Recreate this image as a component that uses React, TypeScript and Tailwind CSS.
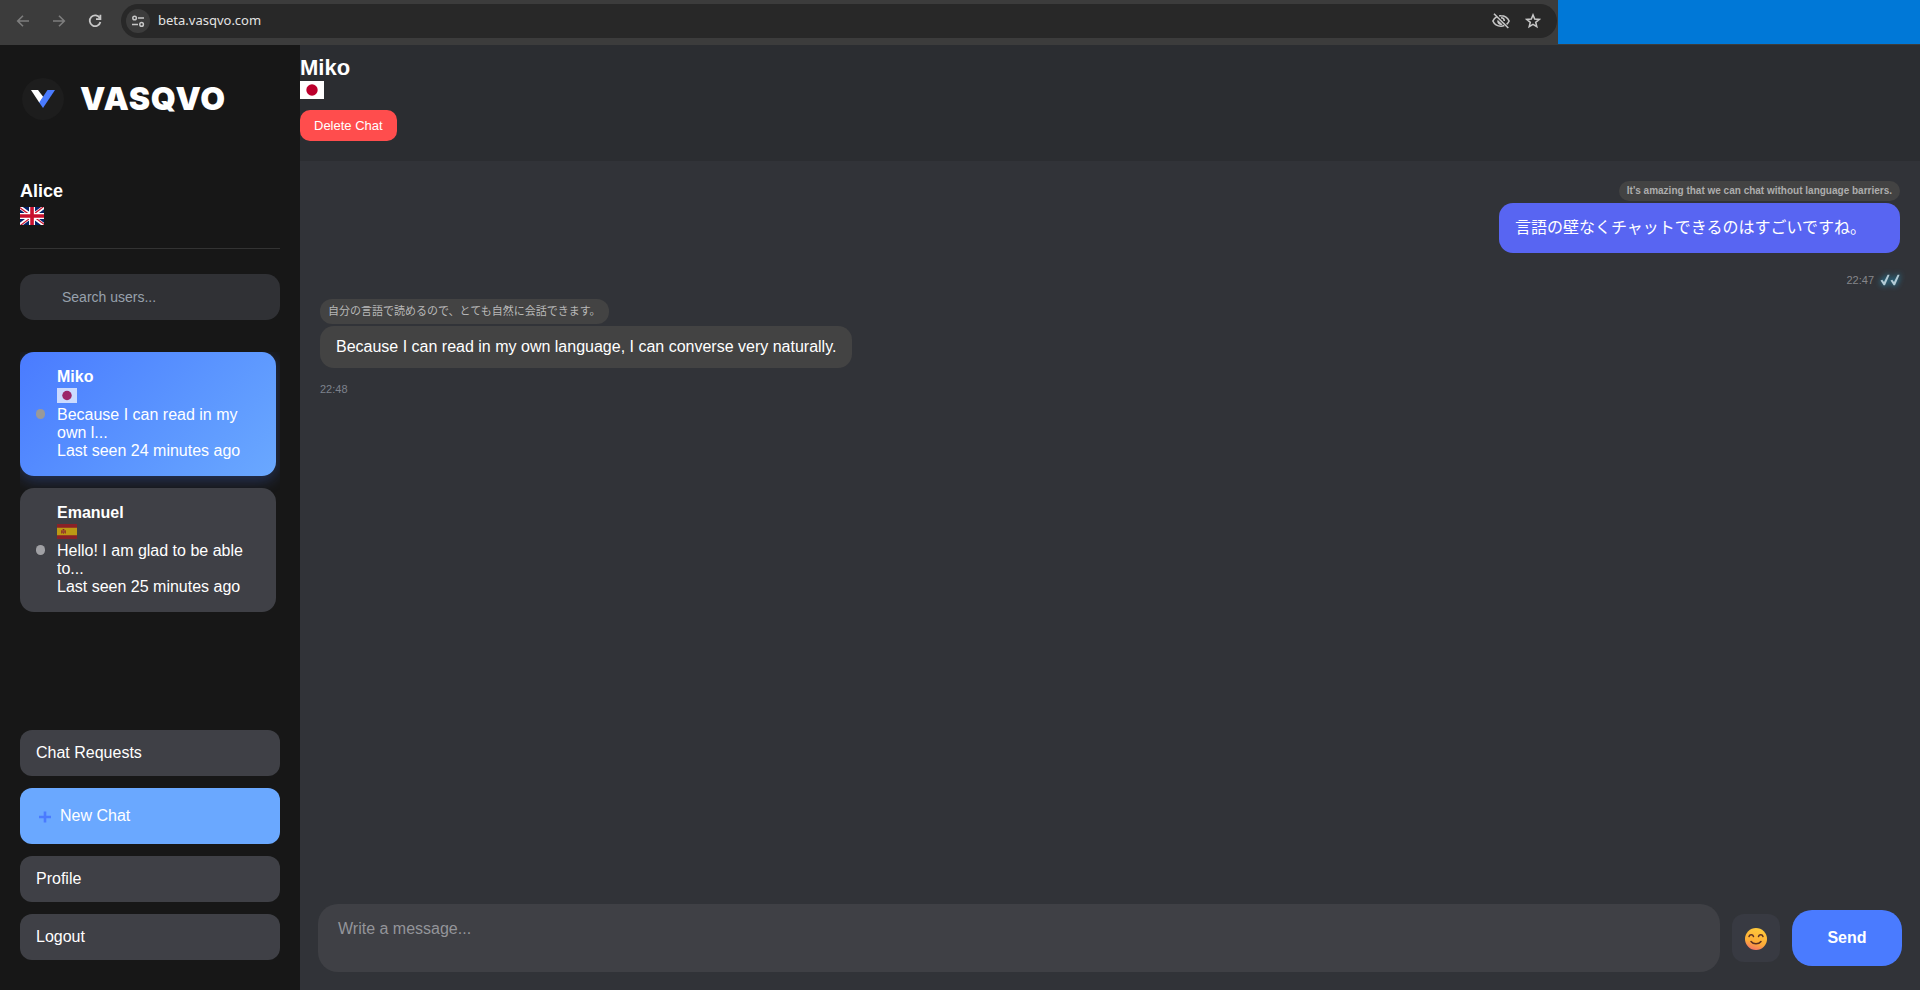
import type { ReactNode } from 'react';

function JapanFlag({ className }: { className: string }) {
  return (
    <svg viewBox="0 0 24 18" className={className} role="img" aria-label="Japan">
      <path fill="#fff" d="M0 0h24v18H0z" />
      <circle cx="12" cy="9" r="5.7" fill="#bc002d" />
    </svg>
  );
}

function SpainFlag({ className }: { className: string }) {
  return (
    <svg viewBox="0 0 24 18" className={className} role="img" aria-label="Spain">
      <path fill="#aa151b" d="M0 0h24v18H0z" />
      <path fill="#f1bf00" d="M0 4.5h24v9H0z" />
      <path fill="#ad1519" d="M5 7.5h.9v4H5zM9.6 7.5h.9v4h-.9zM6.4 7.6h2.8v2.6a1.4 1.4 0 0 1-2.8 0zM6.8 6h2v1.1h-2z" />
      <path fill="#c8b1a0" d="M7.1 8.2h.7v.8h-.7zM7.9 9.3h.7v.8h-.7z" />
    </svg>
  );
}

function UkFlag({ className }: { className: string }) {
  return (
    <svg viewBox="0 0 640 480" className={className} role="img" aria-label="United Kingdom">
      <path fill="#012169" d="M0 0h640v480H0z" />
      <path fill="#fff" d="m75 0 244 181L562 0h78v62L400 241l240 178v61h-80L320 301 81 480H0v-60l239-178L0 64V0z" />
      <path fill="#c8102e" d="m424 281 216 159v40L369 281zm-184 20 6 35L54 480H0zM640 0v3L391 191l2-44L590 0zM0 0l239 176h-60L0 42z" />
      <path fill="#fff" d="M241 0v480h160V0zM0 160v160h640V160z" />
      <path fill="#c8102e" d="M0 193v96h640v-96zM273 0v480h96V0z" />
    </svg>
  );
}

function BrowserBar() {
  return (
    <div className="flex h-[45px] shrink-0 bg-[#3c3c3c] text-[#c7c7c7]">
      <div className="flex w-[121px] shrink-0 items-center gap-5 pb-[3px] pl-[15px]">
        <button aria-label="Back" className="text-[#7d7d7d]">
          <svg viewBox="0 0 16 16" className="size-4" fill="none" stroke="currentColor" strokeWidth="1.6">
            <path d="M14 8H3M8 2.7 2.7 8 8 13.3" />
          </svg>
        </button>
        <button aria-label="Forward" className="text-[#7d7d7d]">
          <svg viewBox="0 0 16 16" className="size-4" fill="none" stroke="currentColor" strokeWidth="1.6">
            <path d="M2 8h11M8 2.7 13.3 8 8 13.3" />
          </svg>
        </button>
        <button aria-label="Reload">
          <svg viewBox="0 0 16 16" className="size-4" fill="none" stroke="currentColor" strokeWidth="1.8">
            <path d="M12.9 5.2A5.4 5.4 0 1 0 13.4 9" />
            <path d="M13.4 1.8v4.4H9" />
          </svg>
        </button>
      </div>
      <div className="mt-1 flex h-[34px] flex-1 items-center rounded-full bg-[#282828] pr-4 pl-[5px]">
        <button aria-label="Site settings" className="flex size-6 items-center justify-center rounded-full bg-[#3c3c3c]">
          <svg viewBox="0 0 14 14" className="size-[14px]" fill="none" stroke="currentColor" strokeWidth="1.5">
            <circle cx="3.6" cy="4" r="1.8" />
            <path d="M7 4h6M1 10.4h6" />
            <circle cx="10.6" cy="10.4" r="1.8" />
          </svg>
        </button>
        <input
          aria-label="Address"
          defaultValue="beta.vasqvo.com"
          className="ml-2 min-w-0 flex-1 bg-transparent font-['Noto_Sans',sans-serif] text-[13px] text-[#e3e3e3] outline-none"
        />
        <button aria-label="Tracking blocked" className="mr-[15px]">
          <svg viewBox="0 0 18 18" className="size-[18px]" fill="none" stroke="currentColor" strokeWidth="1.6">
            <path d="M5 4.6C3.2 5.5 1.7 7 .9 9c1.4 3.2 4.5 5.2 8.1 5.2 1.2 0 2.3-.2 3.3-.6M7.2 3.9A9 9 0 0 1 9 3.8c3.6 0 6.7 2 8.1 5.2-.6 1.3-1.4 2.4-2.5 3.3" />
            <path d="M2 1.7 16.3 16" />
            <path d="M5.6 7.8a3.6 3.6 0 0 0 5 4.7z" fill="currentColor" stroke="none" />
            <path d="M9 5.8A3.3 3.3 0 0 1 12.3 9" />
          </svg>
        </button>
        <button aria-label="Bookmark this page">
          <svg viewBox="0 0 16 16" className="size-4" fill="none" stroke="currentColor" strokeWidth="1.5">
            <path d="m8 1.9 1.7 4.2 4.5.3-3.500 2.900 1.100 4.400L8 11.300l-3.800 2.400 1.100-4.400-3.500-2.900 4.500-.3z" />
          </svg>
        </button>
      </div>
      <div className="ml-px h-[44px] w-[362px] bg-[#0078d7]" />
    </div>
  );
}

type ChatCardProps = {
  name: string;
  flag: ReactNode;
  preview: string;
  lastSeen: string;
  active?: boolean;
};

function ChatCard({ name, flag, preview, lastSeen, active }: ChatCardProps) {
  return (
    <button
      className={`flex w-full items-center gap-3 rounded-[14px] p-4 text-left text-base leading-[18px] text-white ${
        active
          ? 'bg-linear-135 from-[#4a7bff] to-[#6aa8ff] shadow-[0_4px_15px_rgba(74,123,255,0.3)]'
          : 'bg-[#3f4046]'
      }`}
    >
      <span className={`h-[10px] w-[9px] shrink-0 rounded-full ${active ? 'bg-[#999999]' : 'bg-[#a0a0a4]'}`} />
      <span className="block">
        <strong className="block">{name}</strong>
        <span className="block h-5 pt-[2px] opacity-70">{flag}</span>
        <span className="block">{preview}</span>
        <span className="block">{lastSeen}</span>
      </span>
    </button>
  );
}

function MenuButton({ children }: { children: ReactNode }) {
  return <button className="h-[46px] rounded-xl bg-[#3f4046] px-4 text-left text-base text-white">{children}</button>;
}

function Sidebar() {
  return (
    <aside className="flex w-[300px] shrink-0 flex-col bg-[#171717] px-5 pb-[30px] text-white">
      <div className="mt-8 flex h-11 items-center gap-4 pl-[2px]">
        <span className="flex size-[42px] items-center justify-center rounded-full bg-[#1d1d1d]">
          <svg viewBox="0 0 24 18" className="h-[18px] w-6">
            <path fill="#fff" d="M0 0h7l5.300 7L8.500 13z" />
            <path fill="#4a7bff" d="M16.500 0H24L12 18 8.200 12.500z" />
          </svg>
        </span>
        <h1 className="font-[Inter,sans-serif] text-[32px] leading-9 font-black tracking-wide">VASQVO</h1>
      </div>
      <div className="mt-[60px] border-b border-[#333] pb-[23px]">
        <h2 className="text-lg leading-5 font-bold">Alice</h2>
        <UkFlag className="mt-[6px] h-[18px] w-6" />
      </div>
      <input
        type="search"
        aria-label="Search users"
        placeholder="Search users..."
        className="mt-[25px] h-[46px] w-full shrink-0 rounded-[14px] bg-[#303135] pl-[42px] text-sm outline-none placeholder:text-[#98a1ad]"
      />
      <div className="mt-8 flex flex-1 flex-col gap-3 overflow-hidden pr-1">
        <ChatCard
          name="Miko"
          flag={<JapanFlag className="h-[15px] w-5" />}
          preview="Because I can read in my own l..."
          lastSeen="Last seen 24 minutes ago"
          active
        />
        <ChatCard
          name="Emanuel"
          flag={<SpainFlag className="h-[15px] w-5" />}
          preview="Hello! I am glad to be able to..."
          lastSeen="Last seen 25 minutes ago"
        />
      </div>
      <nav className="flex flex-col gap-3">
        <MenuButton>Chat Requests</MenuButton>
        <button className="flex h-14 items-center rounded-xl bg-[#6aa8ff] px-4 text-base">
          <svg viewBox="0 0 24 24" className="size-6" stroke="#4a7bff" strokeWidth="2.600">
            <path d="M3 13h12M9 7.500v11" />
          </svg>
          New Chat
        </button>
        <MenuButton>Profile</MenuButton>
        <MenuButton>Logout</MenuButton>
      </nav>
    </aside>
  );
}

function ReadTicks() {
  return (
    <svg
      viewBox="0 0 20 12"
      className="h-3 w-5 drop-shadow-[0_0_3px_#22b8ee]"
      fill="#b4ccd6"
      role="img"
      aria-label="Read"
    >
      <path d="M.5 6.600 2.300 5.700 4 8 7.600.8h2L5 11.300H3.600zM10.500 6.600l1.800-.9L14 8 17.600.8h2L15 11.300h-1.400z" />
    </svg>
  );
}

function ChatPanel() {
  return (
    <main className="flex min-w-0 flex-1 flex-col bg-[#313338] text-white">
      <header className="h-[116px] bg-[#2b2d31] pt-[10px]">
        <h2 className="text-[22px] leading-[26px] font-bold">Miko</h2>
        <JapanFlag className="h-[18px] w-6" />
        <button className="mt-[11px] block h-[31px] rounded-[10px] bg-[#ff4d4d] px-[14px] text-[13px]">Delete Chat</button>
      </header>

      <section className="flex flex-1 flex-col px-5 pt-5">
        <article className="flex flex-col items-end">
          <p className="rounded-[10px] bg-[#434343] px-2 text-[10px] leading-5 font-bold text-[#adadad]">
            It's amazing that we can chat without language barriers.
          </p>
          <p lang="ja" className="mt-[2px] rounded-[14px] bg-[#5865f2] py-[13px] pr-[34px] pl-4 text-base leading-6">
            言語の壁なくチャットできるのはすごいですね。
          </p>
          <footer className="mt-5 flex items-center gap-[6px] text-[11px] leading-[14px] text-[#85868a]">
            <time>22:47</time>
            <ReadTicks />
          </footer>
        </article>

        <article className="mt-3 flex flex-col items-start">
          <p lang="ja" className="rounded-xl bg-[#434343] px-2 pt-[2px] pb-[3px] text-[11px] leading-5 text-[#b8b8b8]">
            自分の言語で読めるので、とても自然に会話できます。
          </p>
          <p className="mt-[2px] rounded-[14px] bg-[#434343] px-4 py-3 text-base leading-[18px]">
            Because I can read in my own language, I can converse very naturally.
          </p>
          <time className="mt-[14px] text-[11px] leading-[14px] text-[#7d828c]">22:48</time>
        </article>
      </section>

      <form className="flex items-center gap-3 px-[18px] pb-[18px]">
        <textarea
          aria-label="Message"
          placeholder="Write a message..."
          className="h-[68px] min-w-0 flex-1 resize-none rounded-[20px] bg-[#3f4045] px-5 pt-[13px] text-base outline-none placeholder:text-[#94959a]"
        />
        <button type="button" aria-label="Insert emoji" className="flex size-12 items-center justify-center rounded-xl bg-[#383a42]">
          <svg viewBox="0 0 24 24" className="size-6">
            <defs>
              <linearGradient id="face" x1="0.6" y1="0" x2="0.3" y2="1">
                <stop offset="0" stopColor="#ffca3a" />
                <stop offset="0.65" stopColor="#fdab38" />
                <stop offset="1" stopColor="#f4706a" />
              </linearGradient>
            </defs>
            <circle cx="12" cy="13" r="11" fill="url(#face)" />
            <g fill="none" stroke="#5a2f24" strokeWidth="1.500" strokeLinecap="round">
              <path d="M5 10.500c.7-2.400 3.800-2.400 4.500 0M14.500 10.500c.7-2.400 3.800-2.400 4.500 0M7 15.500c2.400 3 7.600 3 10 0" />
            </g>
          </svg>
        </button>
        <button type="button" className="h-14 w-[110px] rounded-[20px] bg-[#4a7bff] text-base font-bold">
          Send
        </button>
      </form>
    </main>
  );
}

export default function App() {
  return (
    <div className="flex min-h-screen flex-col font-['Liberation_Sans','Noto_Sans_CJK_JP',sans-serif]">
      <BrowserBar />
      <div className="flex flex-1">
        <Sidebar />
        <ChatPanel />
      </div>
    </div>
  );
}
